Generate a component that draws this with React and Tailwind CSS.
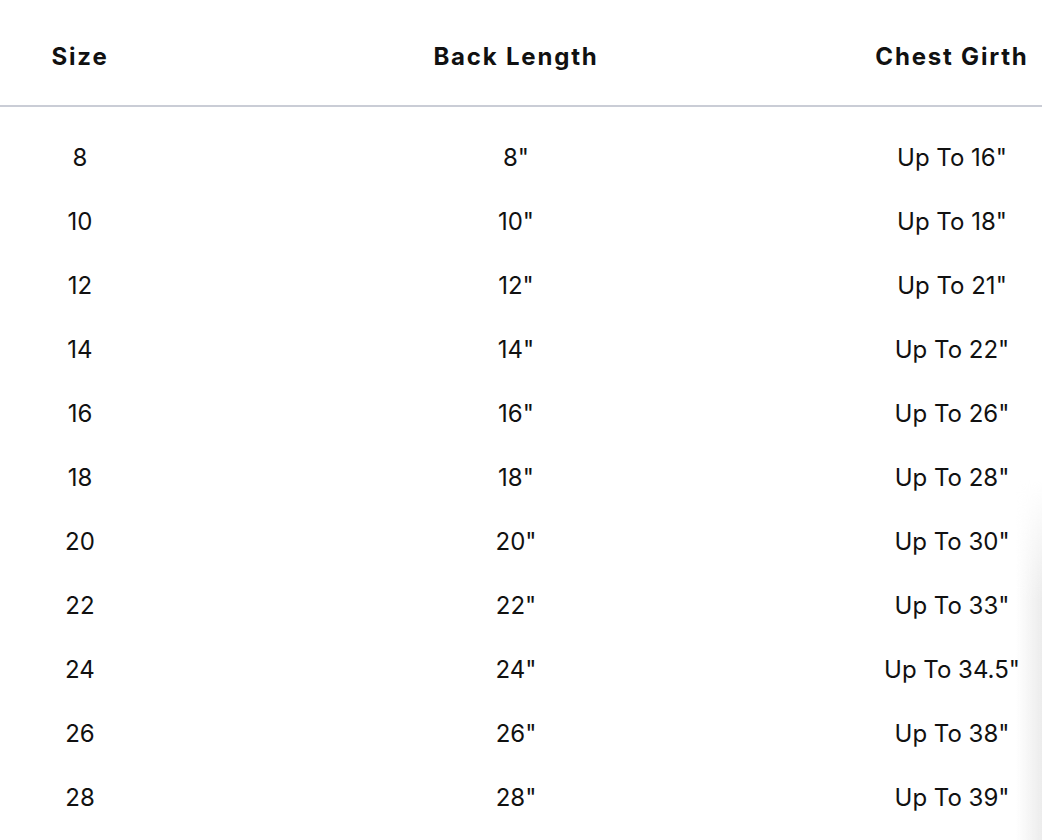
import React from "react";

const rows = [
  ["8", '8"', 'Up To 16"'],
  ["10", '10"', 'Up To 18"'],
  ["12", '12"', 'Up To 21"'],
  ["14", '14"', 'Up To 22"'],
  ["16", '16"', 'Up To 26"'],
  ["18", '18"', 'Up To 28"'],
  ["20", '20"', 'Up To 30"'],
  ["22", '22"', 'Up To 33"'],
  ["24", '24"', 'Up To 34.5"'],
  ["26", '26"', 'Up To 38"'],
  ["28", '28"', 'Up To 39"'],
];

export default function App() {
  return (
    <div
      className="relative w-[1042px] h-[840px] overflow-hidden bg-white text-[#111]"
      style={{ fontFamily: "Inter, 'Noto Sans', sans-serif" }}
    >
      <div className="grid grid-cols-[160px_712px_160px] h-[107px] items-center pt-[8px] border-b-2 border-[#cacdd6] w-[1042px]">
        <div className="text-center text-[24px] font-bold tracking-[1.8px]">Size</div>
        <div className="text-center text-[24px] font-bold tracking-[1.8px]">Back Length</div>
        <div className="text-center text-[24px] font-bold tracking-[1.8px]">Chest Girth</div>
      </div>
      <div className="pt-[19px]">
        {rows.map((r) => (
          <div key={r[0]} className="grid grid-cols-[160px_712px_160px] h-[64px] items-center text-[24px]">
            <div className="text-center">{r[0]}</div>
            <div className="text-center">{r[1]}</div>
            <div className="text-center">{r[2]}</div>
          </div>
        ))}
      </div>
      <div
        className="absolute right-0 top-[480px] bottom-0 w-[26px] bg-gradient-to-l from-[#ececec] to-transparent"
        style={{ maskImage: "linear-gradient(to bottom, transparent, black 120px)", WebkitMaskImage: "linear-gradient(to bottom, transparent, black 120px)" }}
      />
    </div>
  );
}
